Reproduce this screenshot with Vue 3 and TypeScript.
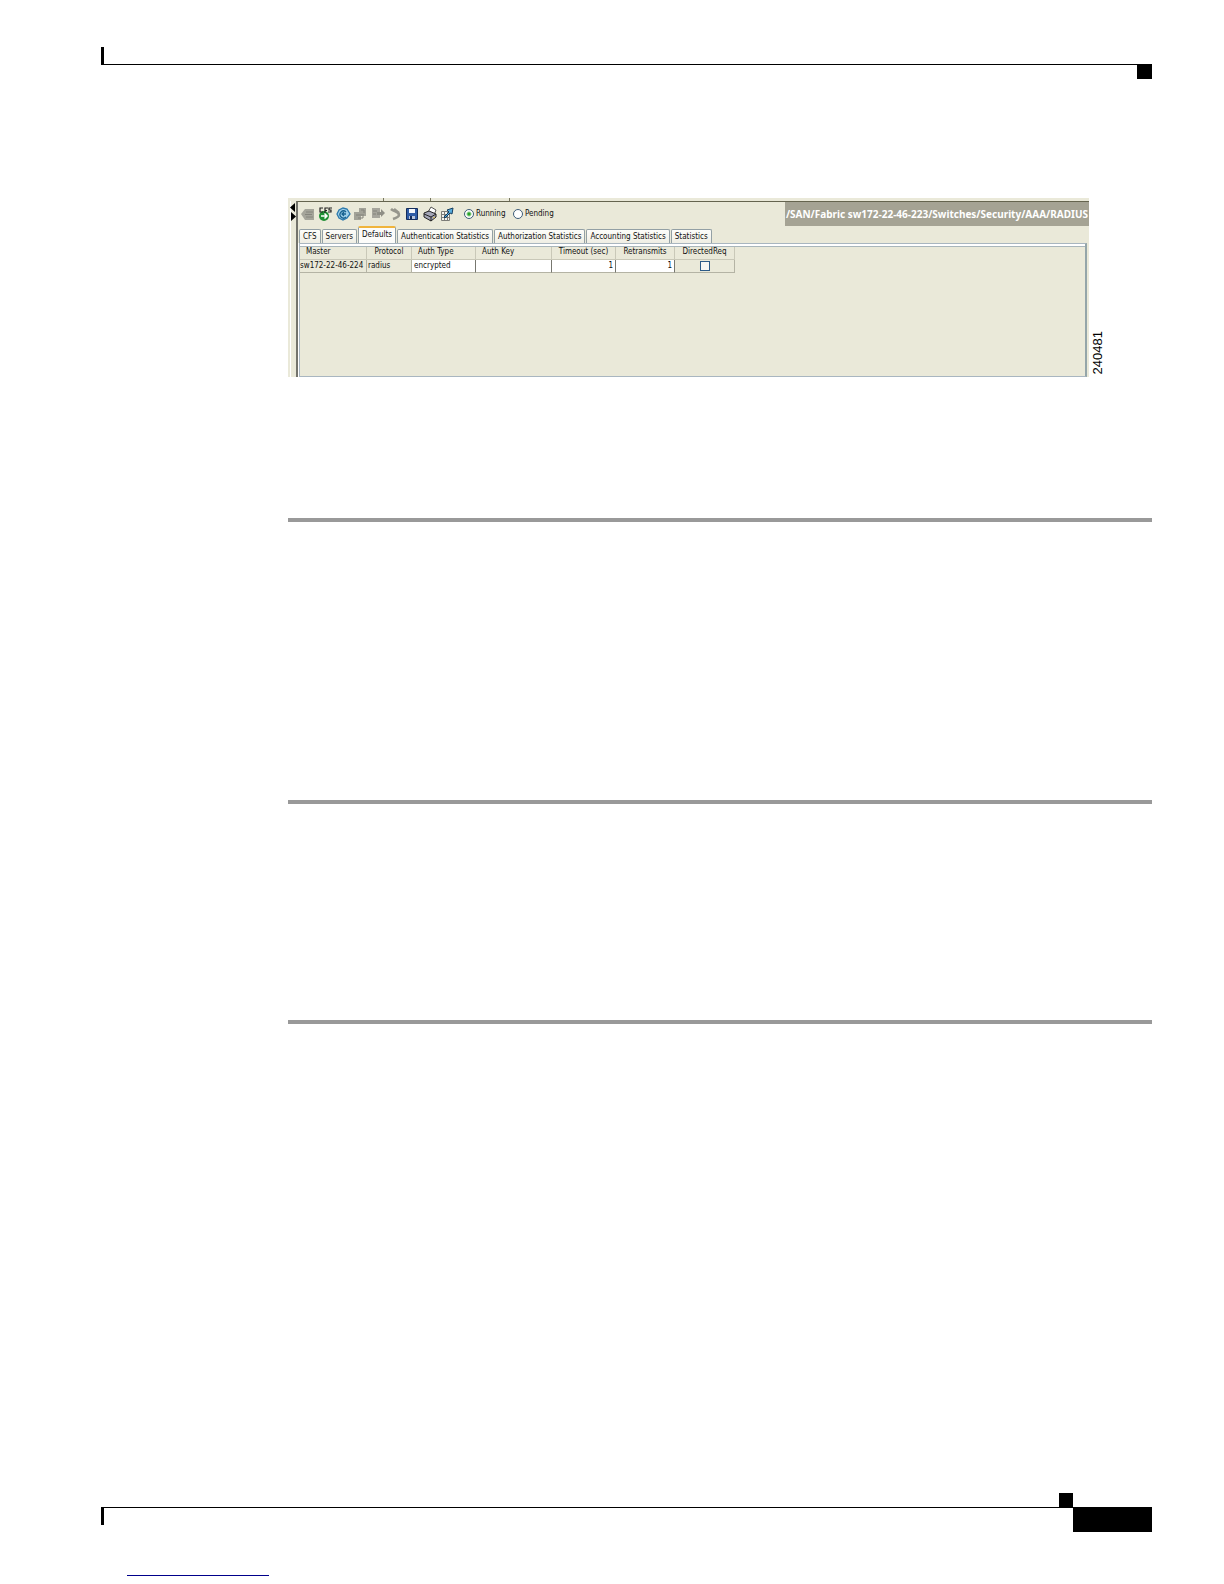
<script setup lang="ts">
import { ref } from 'vue'

interface Column {
  label: string
  width: number
}

const tabs: string[] = [
  'CFS',
  'Servers',
  'Defaults',
  'Authentication Statistics',
  'Authorization Statistics',
  'Accounting Statistics',
  'Statistics',
]
const activeTab = ref<string>('Defaults')

const columns: Column[] = [
  { label: 'Master', width: 67 },
  { label: 'Protocol', width: 45 },
  { label: 'Auth Type', width: 64 },
  { label: 'Auth Key', width: 76 },
  { label: 'Timeout (sec)', width: 64 },
  { label: 'Retransmits', width: 59 },
  { label: 'DirectedReq', width: 60 },
]

const mode = ref<string>('running')
const authType = ref<string>('encrypted')
const authKey = ref<string>('')
const timeout = ref<string>('1')
const retransmits = ref<string>('1')
const directed = ref<boolean>(false)
</script>

<template>
  <div class="page">
    <header class="page-head">
      <span class="tick"></span>
      <span class="head-block"></span>
    </header>

    <main class="content">
      <figure class="figure">
        <div class="window">
          <div class="topstrip"><i></i><i></i><i></i></div>
          <div class="split">
            <svg viewBox="0 0 8 20" width="8" height="20" aria-hidden="true">
              <path d="M7 0v9L2 4.500zM3 9v9l5-4.500z" fill="#000" />
            </svg>
          </div>
          <div class="pane">
            <div class="toolbar">
              <div class="icons">
                <button type="button" aria-label="Back">
                  <svg viewBox="0 0 16 16"><path d="M1 8l4-5h9v11H5z" fill="#a5a59b" /><path d="M6 6h7M5 8.500h7M6 11h7" stroke="#86867e" /></svg>
                </button>
                <button type="button" aria-label="CFS">
                  <svg viewBox="0 0 16 16">
                    <circle cx="7" cy="10" r="5" fill="#1f8f35" />
                    <path d="M4 10h6M7.500 7.500L10 10l-2.500 2.500" fill="none" stroke="#fff" stroke-width="1.500" />
                    <path d="M6 2H3v4h3M8 7V2h3M8 4.500h2M15 2h-3v2h2v2h-3" fill="none" stroke="#222" stroke-width="1.200" />
                  </svg>
                </button>
                <button type="button" aria-label="Refresh">
                  <svg viewBox="0 0 16 16">
                    <path d="M2 8l2-4 4-2 4 1 3 5-3 4-4 2-4-2z" fill="#9fd0ea" stroke="#2b78ac" stroke-width="1.300" />
                    <path d="M11 11a3.500 3.500 0 1 1 0-5M7 8h4M9 6l-2 2 2 2" fill="none" stroke="#17618f" stroke-width="1.300" />
                  </svg>
                </button>
                <button type="button" aria-label="Copy">
                  <svg viewBox="0 0 16 16"><path d="M7 2h7v8H7zM2 6h7v8H2z" fill="#a2a298" /><path d="M9 4h3v3M4 9h6M6 12h5V8" fill="none" stroke="#82827a" /></svg>
                </button>
                <button type="button" aria-label="Paste">
                  <svg viewBox="0 0 16 16"><path d="M2 2h8v10H2z" fill="#a6a59c" /><path d="M7 6h4V3l4 4-4 4V9H7z" fill="#8f8f86" /><path d="M3 5h4M3 8h3" stroke="#82827a" /></svg>
                </button>
                <button type="button" aria-label="Undo">
                  <svg viewBox="0 0 16 16"><path d="M4 3c3 3 8 2 8 6 0 2-3 3-6 4M7 3l5 4" fill="none" stroke="#96968d" stroke-width="2.500" /></svg>
                </button>
                <button type="button" aria-label="Save">
                  <svg viewBox="0 0 16 16">
                    <path d="M2.500 2.500h11v11h-11z" fill="#2f5ca6" stroke="#142c5c" />
                    <path d="M5 3h6v4H5z" fill="#f4f7fb" />
                    <path d="M5 10h6v3H5z" fill="#b9c6dc" />
                    <path d="M6 10h2v3H6z" fill="#142c5c" />
                  </svg>
                </button>
                <button type="button" aria-label="Print">
                  <svg viewBox="0 0 16 16">
                    <path d="M6 6l3-5 5 3-2 5z" fill="#fff" stroke="#555" />
                    <path d="M2 7l5-2 7 3v3l-5 4-7-4z" fill="#a4a6b8" stroke="#222" />
                    <path d="M2 8l7 3 5-3M9 11v4" fill="none" stroke="#222" />
                    <path d="M11 12l2-1" stroke="#e0c050" />
                  </svg>
                </button>
                <button type="button" aria-label="Export">
                  <svg viewBox="0 0 16 16">
                    <path d="M2.500 5.500h8v9h-8zM2.500 8.500h8M2.500 11.500h8M5.500 5.500v9M8.500 5.500v9" fill="#f4f4ee" stroke="#7d7d78" />
                    <path d="M5 11l5-5-2-2 6-2-1 6-2-1-5 5z" fill="#58aee0" stroke="#173e60" />
                  </svg>
                </button>
              </div>
              <label class="radio"><input v-model="mode" type="radio" name="mode" value="running" />Running</label>
              <label class="radio"><input v-model="mode" type="radio" name="mode" value="pending" />Pending</label>
              <div class="path">/SAN/Fabric sw172-22-46-223/Switches/Security/AAA/RADIUS</div>
            </div>

            <nav class="tabs">
              <button
                v-for="tab in tabs"
                :key="tab"
                type="button"
                :class="['tab', { active: tab === activeTab }]"
                @click="activeTab = tab"
              >{{ tab }}</button>
            </nav>

            <div class="sheet">
              <table>
                <colgroup>
                  <col v-for="c in columns" :key="c.label" :style="{ width: c.width + 'px' }" />
                </colgroup>
                <thead>
                  <tr>
                    <th v-for="c in columns" :key="c.label" scope="col">{{ c.label }}</th>
                  </tr>
                </thead>
                <tbody>
                  <tr>
                    <td>sw172-22-46-224</td>
                    <td>radius</td>
                    <td class="edit"><input v-model="authType" type="text" aria-label="Auth Type" /></td>
                    <td class="edit"><input v-model="authKey" type="text" aria-label="Auth Key" /></td>
                    <td class="edit num"><input v-model="timeout" type="text" aria-label="Timeout (sec)" /></td>
                    <td class="edit num"><input v-model="retransmits" type="text" aria-label="Retransmits" /></td>
                    <td class="check"><input v-model="directed" type="checkbox" aria-label="DirectedReq" /></td>
                  </tr>
                </tbody>
              </table>
            </div>
          </div>
        </div>
        <figcaption>240481</figcaption>
      </figure>

      <hr class="rule first" />
      <hr class="rule second" />
      <hr class="rule third" />
    </main>

    <footer class="page-foot">
      <span class="foot-square"></span>
      <div class="foot-line">
        <span class="tick"></span>
        <span class="foot-block"></span>
      </div>
      <div class="link-line"></div>
    </footer>
  </div>
</template>

<style>
body {
  margin: 0;
  background: #fff;
}
</style>

<style scoped>
* {
  box-sizing: border-box;
}
.page {
  display: flex;
  flex-direction: column;
  min-height: 100vh;
  padding: 47px 72px 8px 101px;
  font: 8px/12px "DejaVu Sans Condensed", "DejaVu Sans", sans-serif;
  color: #111;
}
.page-head {
  display: grid;
  grid-template-rows: 17px 15px;
}
.tick {
  display: block;
  width: 3px;
  height: 18px;
  background: #000;
}
.head-block {
  border-top: 1px solid #000;
  background: linear-gradient(#000, #000) right / 15px 100% no-repeat;
}
.content {
  flex: 1;
  margin-left: 187px;
}
.figure {
  display: flex;
  align-items: flex-end;
  gap: 4px;
  margin: 119px 49px 0 0;
}
.window {
  flex: 1;
  display: grid;
  grid-template-columns: 8px 1fr;
  grid-template-rows: 3px 176px;
  background: #eae9d9;
}
.topstrip {
  grid-column: 1 / 3;
  display: flex;
  padding-left: 95px;
  gap: 46px;
}
.topstrip i {
  width: 1px;
  background: #77765f;
}
.topstrip i:last-child {
  margin-left: 32px;
}
.split {
  padding-top: 2px;
  background: linear-gradient(90deg, #eae9d9 2px, #fff 2px 3px, #eae9d9 3px);
}
.split svg {
  display: block;
}
.pane {
  display: flex;
  flex-direction: column;
  min-width: 0;
  border-top: 1px solid #65644f;
  border-left: 2px solid #73736c;
}
.toolbar {
  display: flex;
  align-items: center;
  height: 24px;
  padding-left: 2px;
  flex: none;
}
.icons {
  display: flex;
  justify-content: space-between;
  width: 155px;
  margin-right: 9px;
}
.icons button {
  width: 16px;
  height: 16px;
  padding: 0;
  border: 0;
  background: none;
}
.icons svg {
  display: block;
  width: 16px;
  height: 16px;
}
.radio {
  display: flex;
  align-items: center;
  gap: 2px;
  width: 49px;
}
.radio input {
  appearance: none;
  flex: none;
  width: 10px;
  height: 10px;
  margin: 0;
  border: 1px solid #3d5c78;
  border-radius: 50%;
  background: #fff;
}
.radio input:checked {
  background: radial-gradient(circle, #29a329 1px, #fff 3px);
}
.path {
  margin-left: auto;
  height: 24px;
  padding: 0 1px;
  background: #a5a394;
  color: #fff;
  font: bold 10px/24px "Noto Sans", sans-serif;
  white-space: nowrap;
}
.tabs {
  display: flex;
  align-items: flex-end;
  gap: 1px;
  height: 17px;
  padding-left: 1px;
  flex: none;
}
.tab {
  height: 14px;
  padding: 0 3px;
  border: 1px solid #93a0a5;
  border-bottom: 0;
  border-radius: 2px 2px 0 0;
  background: linear-gradient(#fdfdfa, #efeee4);
  color: #111;
  font: inherit;
  white-space: nowrap;
}
.tab.active {
  height: 17px;
  padding-bottom: 1px;
  border-top: 2px solid #f0b43c;
  background: #fcfcfa;
}
.sheet {
  flex: 1;
  margin: 0 2px 0 1px;
  border: 1px solid #a9b6c0;
  border-right: 2px solid #94a5a9;
  box-shadow: -1px 0 #fff, inset 0 2px #fff, inset 0 3px #a9b6bb;
  padding-top: 3px;
}
table {
  width: 435px;
  table-layout: fixed;
  border-collapse: separate;
  border-spacing: 0;
}
th {
  height: 13px;
  padding: 0;
  font-weight: normal;
  line-height: 10px;
  text-align: center;
  vertical-align: top;
  border-right: 1px solid #c9c8b8;
  border-bottom: 1px solid #c9c8b8;
  white-space: nowrap;
}
th:first-child,
th:nth-child(3),
th:nth-child(4) {
  padding-left: 6px;
  text-align: left;
}
td {
  height: 13px;
  padding: 0 1px;
  line-height: 12px;
  border-right: 1px solid #b4b3a4;
  border-bottom: 1px solid #b4b3a4;
  white-space: nowrap;
}
td:first-child {
  padding: 0;
}
td.edit {
  padding: 0;
  background: #fff;
  border-right-color: #77776f;
}
td.edit input {
  display: block;
  width: 100%;
  height: 12px;
  padding: 0 2px;
  border: 0;
  background: none;
  color: inherit;
  font: inherit;
}
td.num input {
  text-align: right;
}
td.check input {
  appearance: none;
  display: block;
  width: 10px;
  height: 10px;
  margin: 0 auto;
  border: 1px solid #2c5a86;
  background: #f6f6f2;
}
figcaption {
  writing-mode: vertical-rl;
  transform: rotate(180deg);
  width: 10px;
  margin-bottom: 3px;
  font: 13px/10px "Liberation Sans", Arial, sans-serif;
  color: #000;
}
.rule {
  height: 4px;
  margin: 0;
  border: 0;
  background: #999;
}
.first {
  margin-top: 141px;
}
.second {
  margin-top: 278px;
}
.third {
  margin-top: 216px;
}
.foot-square {
  display: block;
  width: 14px;
  height: 14px;
  margin: 0 79px 0 auto;
  background: #000;
}
.foot-line {
  display: flex;
  justify-content: space-between;
  border-top: 1px solid #000;
}
.foot-line .tick {
  height: 17px;
}
.foot-block {
  width: 79px;
  height: 24px;
  background: #000;
}
.link-line {
  width: 142px;
  height: 1px;
  margin: 43px 0 0 26px;
  background: #00008b;
}
</style>
